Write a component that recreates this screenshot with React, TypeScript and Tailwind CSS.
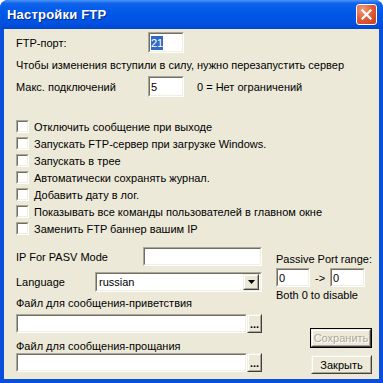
import type { ReactNode } from 'react';

// XP-style "Настройки FTP" dialog with classic 3D controls.

function Sunken({ className = '', children }: { className?: string; children?: ReactNode }): ReactNode {
  return (
    <div className={`flex border border-t-[#aca899] border-l-[#aca899] border-b-white border-r-white ${className}`}>
      <div className="flex flex-1 items-center overflow-hidden border border-t-[#716f64] border-l-[#716f64] border-b-[#f1efe2] border-r-[#f1efe2] bg-white px-[1px]">
        {children}
      </div>
    </div>
  );
}

function Raised({ className = '', children }: { className?: string; children?: ReactNode }): ReactNode {
  return (
    <div className={`flex border border-t-[#f1efe2] border-l-[#f1efe2] border-b-[#404040] border-r-[#404040] ${className}`}>
      <div className="flex flex-1 items-center justify-center border border-t-white border-l-white border-b-[#aca899] border-r-[#aca899] bg-[#ece9d8]">
        {children}
      </div>
    </div>
  );
}

function Check({ label }: { label: string }): ReactNode {
  return (
    <div className="flex h-[17px] items-center gap-[5px]">
      <Sunken className="h-[13px] w-[13px]" />
      <span>{label}</span>
    </div>
  );
}

const options = [
  'Отключить сообщение при выходе',
  'Запускать FTP-сервер при загрузке Windows.',
  'Запускать в трее',
  'Автоматически сохранять журнал.',
  'Добавить дату в лог.',
  'Показывать все команды пользователей в главном окне',
  'Заменить FTP баннер вашим IP',
];

export default function App(): ReactNode {
  return (
    <div className="flex h-[383px] w-[383px] flex-col overflow-hidden rounded-t-[8px] bg-[#0a4fdc] font-['Liberation_Sans',Arial,sans-serif] text-[11px] leading-[14px] text-black">
      <div className="flex h-[29px] shrink-0 items-center justify-between bg-[linear-gradient(to_bottom,#4a94f8_0%,#0f63ea_12%,#0058e8_45%,#0052e0_80%,#0045d2_100%)] pl-[7px] pr-[6px]">
        <span className="text-[13px] font-bold tracking-[0.2px] text-white [text-shadow:1px_1px_0_#0a2a8a]">Настройки FTP</span>
        <div className="flex h-[21px] w-[21px] items-center justify-center rounded-[3px] border border-white bg-[radial-gradient(circle_at_30%_25%,#f3a07f_0%,#e1603a_45%,#c83c1a_100%)]">
          <svg width="11" height="11" viewBox="0 0 11 11">
            <path d="M1.5 1.5 L9.5 9.5 M9.5 1.5 L1.5 9.5" stroke="white" strokeWidth="2.2" strokeLinecap="square" />
          </svg>
        </div>
      </div>

      <div className="mx-[4px] mb-[4px] flex flex-1 flex-col bg-[#ece9d8] pl-[12px] pr-[7px]">
        <div className="mt-[3px] flex h-[21px] items-center">
          <span className="w-[132px]">FTP-порт:</span>
          <Sunken className="h-[21px] w-[36px]">
            <span className="bg-[#316ac5] text-white">21</span>
          </Sunken>
        </div>

        <div className="mt-[5px]">Чтобы изменения вступили в силу, нужно перезапустить сервер</div>

        <div className="mt-[4px] flex h-[21px] items-center">
          <span className="w-[132px]">Макс. подключений</span>
          <Sunken className="h-[21px] w-[36px]">
            <span>5</span>
          </Sunken>
          <span className="ml-[13px]">0 = Нет ограничений</span>
        </div>

        <div className="mt-[21px] flex flex-col">
          {options.map((o) => (
            <Check key={o} label={o} />
          ))}
        </div>

        <div className="flex gap-[14px]">
          <div className="flex w-[246px] flex-col">
            <div className="mt-[10px] flex h-[19px] items-center justify-between">
              <span>IP For PASV Mode</span>
              <Sunken className="h-[19px] w-[119px]" />
            </div>
            <div className="mt-[6px] flex h-[20px] items-center justify-between">
              <span>Language</span>
              <Sunken className="h-[20px] w-[167px]">
                <span className="flex-1 pl-[1px]">russian</span>
                <Raised className="h-[16px] w-[16px]">
                  <svg width="7" height="4" viewBox="0 0 7 4">
                    <path d="M0 0 H7 L3.5 4 Z" fill="black" />
                  </svg>
                </Raised>
              </Sunken>
            </div>
            <div className="mt-[4px]">Файл для сообщения-приветствия</div>
            <div className="mt-[4px] flex h-[19px]">
              <Sunken className="h-[19px] w-[231px]" />
              <Raised className="h-[19px] w-[15px]">
                <span className="font-bold leading-[8px]">...</span>
              </Raised>
            </div>
            <div className="mt-[6px]">Файл для сообщения-прощания</div>
            <div className="flex h-[19px]">
              <Sunken className="h-[19px] w-[231px]" />
              <Raised className="h-[19px] w-[15px]">
                <span className="font-bold leading-[8px]">...</span>
              </Raised>
            </div>
          </div>

          <div className="flex flex-1 flex-col">
            <div className="mt-[15px]">Passive Port range:</div>
            <div className="mt-[2px] flex h-[19px] items-center">
              <Sunken className="h-[19px] w-[34px]">
                <span>0</span>
              </Sunken>
              <span className="mx-[5px]">-&gt;</span>
              <Sunken className="h-[19px] w-[35px]">
                <span>0</span>
              </Sunken>
            </div>
            <div className="mt-[1px]">Both 0 to disable</div>
            <div className="mt-[26px] self-end border border-black">
              <Raised className="h-[18px] w-[60px]">
                <span className="text-[#aca899] [text-shadow:1px_1px_0_white]">Сохранить</span>
              </Raised>
            </div>
            <Raised className="mt-[7px] h-[19px] w-[61px] self-end">
              <span>Закрыть</span>
            </Raised>
          </div>
        </div>
      </div>
    </div>
  );
}
